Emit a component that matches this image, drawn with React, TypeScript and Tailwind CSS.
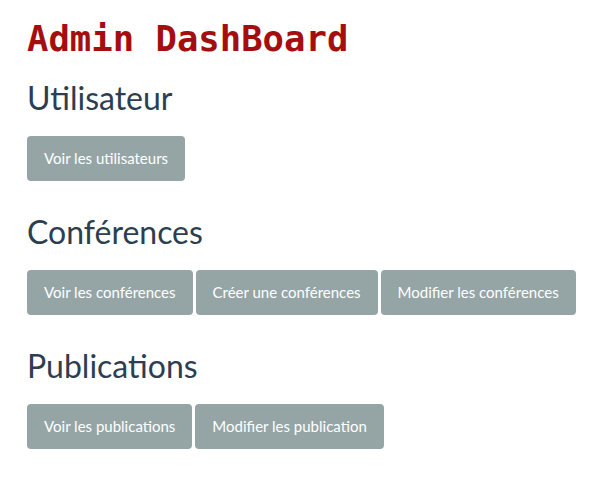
import React from 'react';

const sections = [
  { title: 'Utilisateur', actions: ['Voir les utilisateurs'] },
  { title: 'Conférences', actions: ['Voir les conférences', 'Créer une conférences', 'Modifier les conférences'] },
  { title: 'Publications', actions: ['Voir les publications', 'Modifier les publication'] }
];

const App = () => {
  return <div className="min-h-[478px] bg-white px-[27px] pt-[18px]" style={{ fontFamily: 'Lato, "Open Sans", sans-serif' }}>
      <h1 className="text-[35.6px] leading-[42px] font-bold text-[#a50e0e]" style={{ fontFamily: '"DejaVu Sans Mono", monospace' }}>
        Admin DashBoard
      </h1>
      {sections.map((section, i) => <section key={section.title} className={i === 0 ? 'mt-[19px]' : 'mt-[32px]'}>
          <h2 className="text-[32px] leading-[38px] text-[#2c3e50] mb-[19px]">{section.title}</h2>
          <div className="flex gap-[3px]">
            {section.actions.map(label => <button key={label} className="h-[45px] px-[17px] shrink-0 whitespace-nowrap rounded bg-[#95a5a6] text-white text-[15px]">
                {label}
              </button>)}
          </div>
        </section>)}
    </div>;
};
export default App;
